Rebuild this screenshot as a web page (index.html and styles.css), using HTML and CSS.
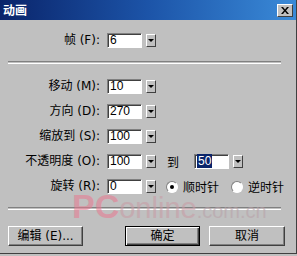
FILE: index.html
```html
<!DOCTYPE html>
<html>
<head>
<meta charset="utf-8">
<link rel="stylesheet" href="styles.css">
</head>
<body>
<div class="win">
  <div class="title">
    <span class="ttext">动画</span>
    <span class="close"><svg width="8" height="7" viewBox="0 0 8 7"><path d="M0 0h2l2 2.5L6 0h2L5 3.5 8 7H6L4 4.5 2 7H0l3-3.5z" fill="#000"/></svg></span>
  </div>
  <div class="body">
    <div class="row">
      <span class="lbl">帧 (F):</span>
      <span class="inp">6</span>
      <span class="dd"><i></i></span>
    </div>
    <div class="sep sep1"></div>
    <div class="rows">
      <div class="row">
        <span class="lbl">移动 (M):</span>
        <span class="inp">10</span>
        <span class="dd"><i></i></span>
      </div>
      <div class="row">
        <span class="lbl">方向 (D):</span>
        <span class="inp">270</span>
        <span class="dd"><i></i></span>
      </div>
      <div class="row">
        <span class="lbl">缩放到 (S):</span>
        <span class="inp">100</span>
        <span class="dd"><i></i></span>
      </div>
      <div class="row">
        <span class="lbl">不透明度 (O):</span>
        <span class="inp">100</span>
        <span class="dd"><i></i></span>
        <span class="to">到</span>
        <span class="inp"><span class="selected">50</span></span>
        <span class="dd"><i></i></span>
      </div>
      <div class="row">
        <span class="lbl">旋转 (R):</span>
        <span class="inp">0</span>
        <span class="dd"><i></i></span>
        <span class="radio on"><b></b></span><span class="rtext">顺时针</span>
        <span class="radio"></span><span class="rtext">逆时针</span>
      </div>
    </div>
    <div class="sep sep2"></div>
    <div class="buttons">
      <span class="btn edit">编辑 (E)...</span>
      <span class="spacer"></span>
      <span class="btn ok">确定</span>
      <span class="btn cancel">取消</span>
    </div>
  </div>
  <div class="wm"><span class="pc">PC</span><span class="online">online</span><span class="com">.com.cn</span></div>
</div>
</body>
</html>
```
FILE: styles.css
```css
html, body {
  margin: 0;
  padding: 0;
  background: #c0c0c0;
}
.win {
  position: relative;
  width: 297px;
  height: 254px;
  box-sizing: border-box;
  background: #c0c0c0;
  border-right: 1px solid #404040;
  border-bottom: 1px solid #404040;
  font-family: "Noto Sans CJK SC", "Liberation Sans", sans-serif;
  font-size: 12px;
  color: #000;
  overflow: hidden;
}
.title {
  height: 20px;
  background: linear-gradient(to right, #0a246a 0%, #1c54a8 50%, #3a8ad8 100%);
  display: flex;
  align-items: center;
  justify-content: space-between;
  padding: 0 3px 0 3px;
}
.ttext {
  color: #fff;
  font-size: 12px;
  font-weight: bold;
  line-height: 20px;
}
.close {
  width: 16px;
  height: 13px;
  box-sizing: border-box;
  background: #c0c0c0;
  border-top: 1px solid #fff;
  border-left: 1px solid #fff;
  border-right: 1px solid #404040;
  border-bottom: 1px solid #404040;
  display: flex;
  align-items: center;
  justify-content: center;
}
.body {
  padding-top: 13px;
}
.row {
  display: flex;
  align-items: center;
  height: 15px;
}
.lbl {
  width: 100px;
  text-align: right;
  margin-right: 7px;
  white-space: nowrap;
  line-height: 15px;
  font-family: "DejaVu Sans", "Noto Sans CJK SC", sans-serif;
}
.inp {
  width: 35px;
  height: 15px;
  box-sizing: border-box;
  background: #fff;
  border-top: 1px solid #808080;
  border-left: 1px solid #808080;
  border-right: 1px solid #fff;
  border-bottom: 1px solid #fff;
  box-shadow: inset 1px 1px 0 #404040;
  font-family: "Liberation Sans", sans-serif;
  font-size: 12px;
  line-height: 13px;
  padding-left: 2px;
}
.selected {
  background: #0a246a;
  color: #fff;
  padding: 0 1px;
}
.dd {
  width: 10px;
  height: 13px;
  margin-left: 4px;
  box-sizing: border-box;
  background: #c0c0c0;
  border-top: 1px solid #fff;
  border-left: 1px solid #fff;
  border-right: 1px solid #404040;
  border-bottom: 1px solid #404040;
  display: flex;
  align-items: center;
  justify-content: center;
}
.dd i {
  width: 0;
  height: 0;
  border-left: 3px solid transparent;
  border-right: 3px solid transparent;
  border-top: 3px solid #000;
}
.to {
  margin-left: 11px;
  margin-right: 15px;
}
.sep {
  margin: 0 15px 0 8px;
  height: 1px;
  border-top: 1px solid #808080;
  border-bottom: 1px solid #fff;
}
.sep1 {
  margin-top: 13px;
}
.rows {
  margin-top: 15px;
  display: flex;
  flex-direction: column;
  gap: 10px;
}
.radio {
  width: 12px;
  height: 12px;
  box-sizing: border-box;
  border-radius: 50%;
  background: #fff;
  border: 1px solid;
  border-color: #808080 #fff #fff #808080;
  margin-left: 10px;
  display: flex;
  align-items: center;
  justify-content: center;
}
.radio b {
  width: 4px;
  height: 4px;
  border-radius: 50%;
  background: #000;
}
.rtext {
  margin-left: 5px;
}
.radio + .rtext + .radio {
  margin-left: 12px;
}
.sep2 {
  margin-top: 13px;
}
.buttons {
  margin-top: 16px;
  display: flex;
  padding-left: 8px;
}
.btn {
  height: 20px;
  box-sizing: border-box;
  background: #c0c0c0;
  border-top: 1px solid #fff;
  border-left: 1px solid #fff;
  border-right: 1px solid #404040;
  border-bottom: 1px solid #404040;
  box-shadow: inset -1px -1px 0 #808080;
  display: flex;
  align-items: center;
  justify-content: center;
  line-height: 18px;
  font-family: "DejaVu Sans", "Noto Sans CJK SC", sans-serif;
}
.edit {
  width: 75px;
}
.spacer {
  width: 42px;
}
.ok {
  width: 75px;
  border: 1px solid #000;
  box-shadow: inset 1px 1px 0 #fff, inset -1px -1px 0 #404040, inset -2px -2px 0 #808080;
}
.cancel {
  width: 76px;
  margin-left: 9px;
}
.wm {
  position: absolute;
  left: 72px;
  top: 194px;
  pointer-events: none;
  font-family: "Liberation Sans", sans-serif;
  font-size: 34px;
  line-height: 24px;
  white-space: nowrap;
  opacity: 0.55;
}
.pc {
  font-weight: bold;
  color: #e87890;
}
.online {
  font-size: 29px;
  color: #c89aa4;
}
.com {
  font-size: 20px;
  color: #b8a0a8;
}
```
